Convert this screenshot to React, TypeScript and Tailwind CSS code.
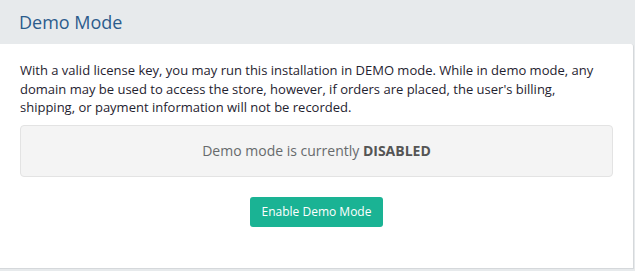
import React from "react";

export default function App() {
  return (
    <div
      className="w-[635px] h-[271px] bg-[#e7eaec] overflow-hidden"
      style={{ fontFamily: '"Open Sans", "Liberation Sans", sans-serif' }}
    >
      <div className="h-[44px] flex items-center pl-[19px]">
        <h1 className="text-[18px] leading-none text-[#2c5c8c] font-normal">Demo Mode</h1>
      </div>
      <div className="w-[634px] h-[225px] bg-white border-r border-b border-[#d5d8db] rounded-tr-[3px] px-[20px] pt-[17px]">
        <p className="text-[13px] leading-[18.57px] text-[#1f2330]">
          With a valid license key, you may run this installation in DEMO mode. While in demo mode, any domain may be used to access the store, however, if orders are placed, the user's billing, shipping, or payment information will not be recorded.
        </p>
        <div className="mt-[8px] w-[593px] h-[52px] bg-[#f4f4f4] border border-[#e3e3e3] rounded-[4px] flex items-center justify-center text-[14px] text-[#676a6c]">
          <span>
            Demo mode is currently <b className="font-bold text-[#555]">DISABLED</b>
          </span>
        </div>
        <div className="flex justify-center mt-[20px]">
          <button className="h-[30px] w-[133px] bg-[#1ab394] rounded-[3px] text-white text-[12px] flex items-center justify-center">
            Enable Demo Mode
          </button>
        </div>
      </div>
    </div>
  );
}
